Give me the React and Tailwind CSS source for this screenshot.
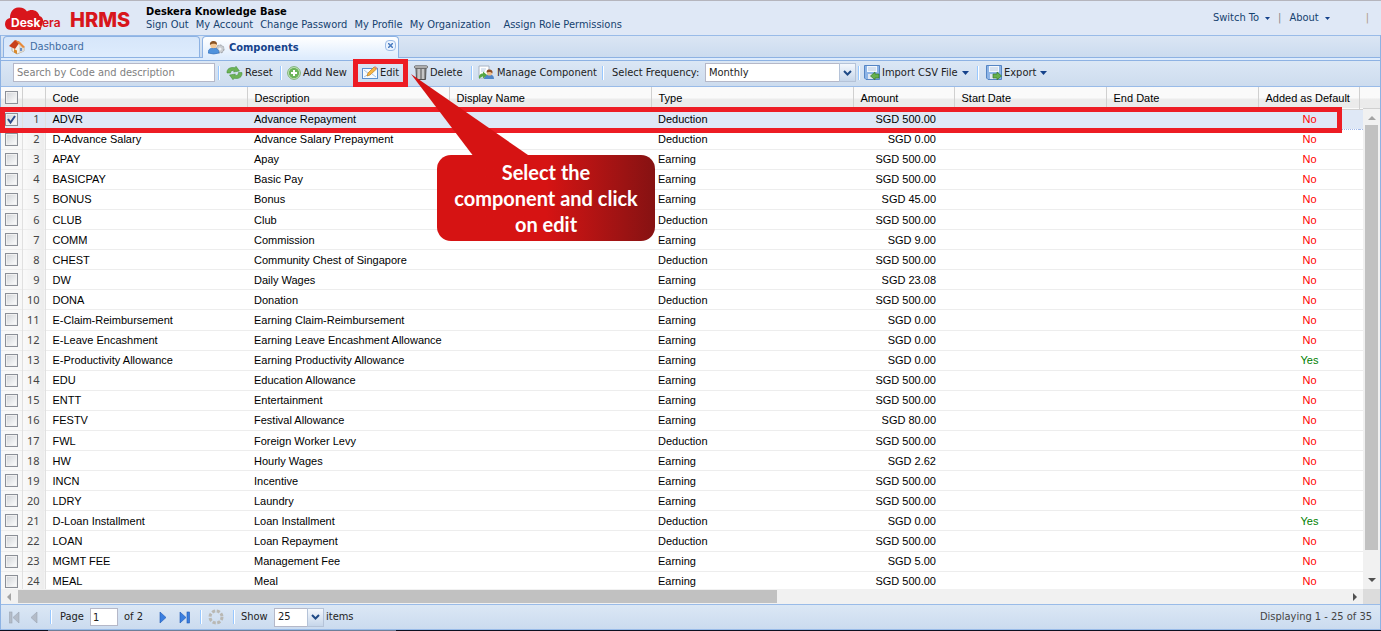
import React from "react";
import clsx from "clsx";

const links = [
  "Sign Out",
  "My Account",
  "Change Password",
  "My Profile",
  "My Organization",
];

const rows = [
  ["ADVR", "Advance Repayment", "Deduction", "500.00"],
  ["D-Advance Salary", "Advance Salary Prepayment", "Deduction", "0.00"],
  ["APAY", "Apay", "Earning", "500.00"],
  ["BASICPAY", "Basic Pay", "Earning", "500.00"],
  ["BONUS", "Bonus", "Earning", "45.00"],
  ["CLUB", "Club", "Deduction", "500.00"],
  ["COMM", "Commission", "Earning", "9.00"],
  ["CHEST", "Community Chest of Singapore", "Deduction", "500.00"],
  ["DW", "Daily Wages", "Earning", "23.08"],
  ["DONA", "Donation", "Deduction", "500.00"],
  ["E-Claim-Reimbursement", "Earning Claim-Reimbursement", "Earning", "0.00"],
  ["E-Leave Encashment", "Earning Leave Encashment Allowance", "Earning", "0.00"],
  ["E-Productivity Allowance", "Earning Productivity Allowance", "Earning", "0.00", true],
  ["EDU", "Education Allowance", "Earning", "500.00"],
  ["ENTT", "Entertainment", "Earning", "500.00"],
  ["FESTV", "Festival Allowance", "Earning", "80.00"],
  ["FWL", "Foreign Worker Levy", "Deduction", "500.00"],
  ["HW", "Hourly Wages", "Earning", "2.62"],
  ["INCN", "Incentive", "Earning", "500.00"],
  ["LDRY", "Laundry", "Earning", "500.00"],
  ["D-Loan Installment", "Loan Installment", "Deduction", "0.00", true],
  ["LOAN", "Loan Repayment", "Deduction", "500.00"],
  ["MGMT FEE", "Management Fee", "Earning", "5.00"],
  ["MEAL", "Meal", "Earning", "500.00"],
];

const columns = [
  "Code",
  "Description",
  "Display Name",
  "Type",
  "Amount",
  "Start Date",
  "End Date",
  "Added as Default",
];

/* ---------- icons ---------- */

const Logo = () => (
  <svg width="126" height="28" viewBox="0 0 126 28" aria-label="Deskera HRMS">
    <path
      d="M6 25C2 25 0 22 0 19C0 16 2 13.500 5 13C5 7 8 3 13 2.500C17 2 20 3.500 22 6.500C26 3.500 33 5 34.500 11C37.500 12 39 15 37.500 18.500L35.500 25Z"
      fill="#d8161c"
    />
    <text x="6" y="22" fontSize="12" fontWeight="700" fill="#fff" className="font-['Inter']">
      Desk
    </text>
    <text x="37" y="22" fontSize="12" fontWeight="600" fill="#d8161c" className="font-['Inter']">
      era
    </text>
    <text x="65" y="22" fontSize="20" fontWeight="800" fill="#d8161c" className="font-['Inter']">
      HRMS
    </text>
  </svg>
);

const HomeIcon = () => (
  <svg width="17" height="16" viewBox="0 0 17 16">
    <path d="M3 7L9 4L15 8V12L8 15L3 12Z" fill="#f3f0ea" stroke="#b9a88d" strokeWidth="0.800" />
    <path d="M9 4L15 8V12L10 14V8Z" fill="#dcd9d2" />
    <path d="M0 7L6 1L11 3L6 10Z" fill="#c8401c" />
    <path d="M6 1L11 3L16 8L14 9L10 5Z" fill="#e88a3a" />
    <path d="M5 10L8 11.500V15L5 13.500Z" fill="#d98a2b" />
    <rect x="11" y="9" width="2" height="3" fill="#6a8fc4" />
  </svg>
);

const UserGearIcon = () => (
  <svg width="17" height="16" viewBox="0 0 17 16">
    <circle cx="12" cy="9" r="4" fill="#c9ccd0" stroke="#9a9ea5" strokeDasharray="2 1" />
    <circle cx="12" cy="9" r="1.500" fill="#eef1f5" />
    <path d="M0 13C0 9 3 8 5.500 8C8 8 11 9 11 13Q6 15 0 13Z" fill="#4f92dc" stroke="#2f6ab5" strokeWidth="0.600" />
    <circle cx="5.500" cy="5" r="3.200" fill="#f3c795" />
    <path d="M2 5C1.500 2 3.500 1 5.500 1C8 1 9.500 2.500 8.800 5C8 3.500 4 3 2 5Z" fill="#8a5424" />
  </svg>
);

const RefreshIcon = () => (
  <svg width="17" height="14" viewBox="0 0 17 14">
    <g fill="#6db356" stroke="#3f8a35" strokeWidth="0.500">
      <path d="M1 7C.5 3 4 .6 9 1.800L10 .3L13.500 5L7.500 6L8.500 4.600C6.500 4 4.500 4.800 4.500 7Z" />
      <path d="M16 6.500C16.500 11 13 13.400 8 12.200L7 13.700L3.500 9L9.500 8L8.500 9.400C10.500 10 12.500 9.200 12.500 6.500Z" />
    </g>
  </svg>
);

const AddIcon = () => (
  <svg width="14" height="14" viewBox="0 0 14 14">
    <circle cx="7" cy="7" r="6.300" fill="#e6f4df" stroke="#6dab60" />
    <circle cx="7" cy="7" r="5.200" fill="#6cb45a" />
    <path d="M7 4V10M4 7H10" stroke="#fff" strokeWidth="2" />
  </svg>
);

const EditIcon = () => (
  <svg width="16" height="14" viewBox="0 0 16 14">
    <rect x=".5" y="2.500" width="15" height="10" fill="#f7fbff" stroke="#5b8fd0" />
    <path d="M2 4L7 8L2 11M14 11L10 8" fill="none" stroke="#a9c6ea" />
    <path d="M5 10L6 7L12 1L14.500 3L8 9Z" fill="#f6b545" stroke="#c07c1c" strokeWidth="0.700" />
    <path d="M12 1L13 0L15.500 2L14.500 3Z" fill="#e58b74" />
  </svg>
);

const TrashIcon = () => (
  <svg width="14" height="15" viewBox="0 0 14 15">
    <path d="M2 3H12L11.500 14.500H2.500Z" fill="#a5a5a5" stroke="#4e4e4e" />
    <path d="M5 4V14M9 4V14" stroke="#e6e6e6" />
    <path d="M7 4V14M11 4V14" stroke="#666" strokeWidth="0.800" />
    <rect x=".5" y=".8" width="13" height="2.400" rx="1" fill="#c9c9c9" stroke="#555" strokeWidth="0.800" />
  </svg>
);

const ManageIcon = () => (
  <svg width="17" height="15" viewBox="0 0 17 15">
    <path d="M1 1H11V13H1Z" fill="#fff" stroke="#a8b4c4" />
    <path d="M3 4H8M3 6H7" stroke="#b8cbe2" />
    <path d="M6 14C6 10 9 9.500 11 9.500C13 9.500 16 10 16 14Z" fill="#4f86c9" />
    <circle cx="11.500" cy="8" r="2.600" fill="#f0bd8b" />
    <path d="M8.500 7.500C8.500 5 10 4.500 11.500 4.500C13.500 4.500 15 5.500 14.500 8.500C13.500 6.800 11 6.500 8.500 7.500Z" fill="#8d4c22" />
    <path d="M1 11C2 9 3.500 8.500 5 8.500V6.500L9 10L5 13.500V11.500C3.500 11.500 2.500 12.500 1 14Z" fill="#57a643" />
  </svg>
);

const DiskIcon = ({ out }) => (
  <svg width="16" height="15" viewBox="0 0 16 15">
    <path d="M.5 .5H15.500V14.500H2L.5 13Z" fill="#8db4e6" stroke="#5585c4" />
    <rect x="3" y="1" width="10" height="6" fill="#f2f7fd" />
    <path d="M4 3H12M4 5H12" stroke="#b9cbe2" />
    <rect x="4" y="9" width="7" height="5" fill="#dfe7f1" />
    <path
      d={out ? "M7 9H11V7L15.500 11L11 14.800V13H7Z" : "M15 9H11V7L6.500 11L11 14.800V13H15Z"}
      fill="#66b04c"
      stroke="#357a2a"
      strokeWidth="0.700"
    />
  </svg>
);

const Caret = () => (
  <svg width="7" height="4" viewBox="0 0 7 4">
    <path d="M0 0H7L3.500 4Z" fill="#15428b" />
  </svg>
);

const SmallCaret = () => (
  <svg width="5" height="3" viewBox="0 0 5 3">
    <path d="M0 0H5L2.500 3Z" fill="#15428b" />
  </svg>
);

const PageArrow = ({ back, bar, muted }) => (
  <svg
    width="12"
    height="13"
    viewBox="0 0 12 13"
    className={clsx(back && "-scale-x-100")}
    fill={muted ? "#b4bcc8" : "#3b7fe0"}
    stroke={muted ? "#9ba5b3" : "#1f57b4"}
    strokeWidth="0.600"
  >
    <path d={bar ? "M1 1L7 6.500L1 12Z" : "M3 1L9 6.500L3 12Z"} />
    {bar && <rect x="8" y="1" width="2.500" height="11" />}
  </svg>
);

const Loader = () => (
  <svg width="16" height="16" viewBox="0 0 16 16">
    <circle cx="8" cy="8" r="6" fill="none" stroke="#b9b8b3" strokeWidth="3" strokeDasharray="3.200 1.512" />
  </svg>
);

/* ---------- small parts ---------- */

const Separator = ({ className }) => (
  <span className={clsx("h-[14px] w-[2px] shrink-0 border-r border-white bg-[#98c8ff]", className)} />
);

const ToolButton = ({ icon, label, menu, className }) => (
  <button type="button" className={clsx("flex h-5 shrink-0 items-center gap-[2px] whitespace-nowrap", className)}>
    {icon}
    <span>{label}</span>
    {menu && (
      <span className="ml-[2px]">
        <Caret />
      </span>
    )}
  </button>
);

const Combo = ({ id, label, value, className }) => (
  <div className={clsx("relative h-[19px] shrink-0", className)}>
    <select
      id={id}
      aria-label={label}
      defaultValue={value}
      className="h-full w-full appearance-none border border-[#b5b8c8] bg-white pl-[3px]"
    >
      <option>{value}</option>
    </select>
    <span className="pointer-events-none absolute inset-y-0 right-0 flex w-[17px] items-center justify-center border border-[#b5c3d8] bg-gradient-to-b from-[#f4f8fd] to-[#c6d6ea]">
      <svg width="9" height="6" viewBox="0 0 9 6">
        <path d="M1 1L4.500 4.500L8 1" fill="none" stroke="#1f4a86" strokeWidth="2" />
      </svg>
    </span>
  </div>
);

const Checkbox = ({ label, checked }) => (
  <span className="ml-1 grid h-[13px] w-[13px]">
    <input
      type="checkbox"
      aria-label={label}
      defaultChecked={checked}
      className="peer col-start-1 row-start-1 h-[13px] w-[13px] appearance-none border border-[#8b8f97] bg-gradient-to-br from-[#cfd2d6] to-white shadow-[inset_0_0_0_1px_#f0f0f0]"
    />
    <svg viewBox="0 0 13 13" className="pointer-events-none invisible col-start-1 row-start-1 peer-checked:visible">
      <path d="M3 6L5.500 9.500L10 3" fill="none" stroke="#2c4a8c" strokeWidth="2" />
    </svg>
  </span>
);

/* ---------- sections ---------- */

const Header = () => (
  <header className="flex h-[35px] items-start border-t border-[#b5b5bd] bg-[#dfe8f6] pl-[5px] text-[#15426f]">
    <div className="mt-1 w-[141px] shrink-0">
      <Logo />
    </div>
    <div className="mt-1 grow">
      <h1 className="text-[11px] leading-[13px] font-bold text-black">Deskera Knowledge Base</h1>
      <nav className="flex gap-[7px] leading-[13px] whitespace-nowrap">
        {links.map((link) => (
          <a key={link} href="#">
            {link}
          </a>
        ))}
        <a href="#" className="ml-[6px]">
          Assign Role Permissions
        </a>
      </nav>
    </div>
    <div className="mt-[10px] flex shrink-0 items-center pr-3">
      <button type="button" className="flex items-center gap-[6px]">
        Switch To
        <SmallCaret />
      </button>
      <span className="mx-2 text-[#888]">|</span>
      <button type="button" className="flex items-center gap-[6px]">
        About
        <SmallCaret />
      </button>
      <span className="ml-9 text-[#b09a86]">|</span>
    </div>
  </header>
);

const Tabs = () => (
  <div className="border-t border-[#99bbe8]">
    <div className="flex h-[22px] items-end gap-[2px] border-b border-[#8db2e3] bg-gradient-to-b from-[#dbe6f4] to-[#cbdbef] pl-[2px]">
      <button
        type="button"
        className="flex h-[21px] w-[197px] items-center gap-1 rounded-t border border-b-0 border-[#8db2e3] bg-gradient-to-b from-[#d6e6fa] to-[#deecfd] pl-[5px] text-[#416da3]"
      >
        <HomeIcon />
        Dashboard
      </button>
      <div className="-mb-px flex h-[22px] w-[197px] items-center rounded-t border border-b-0 border-[#8db2e3] bg-gradient-to-b from-white to-[#deecfd] pl-[5px]">
        <button type="button" className="flex grow items-center gap-1 font-bold text-[#15428b]">
          <UserGearIcon />
          Components
        </button>
        <button
          type="button"
          aria-label="Close tab"
          className="mr-[2px] mb-1 flex h-[11px] w-[11px] items-center justify-center rounded-sm border border-[#9cbbe6] bg-[#eaf3fe]"
        >
          <svg width="5" height="5" viewBox="0 0 5 5">
            <path d="M0 0L5 5M5 0L0 5" stroke="#4b7cc0" strokeWidth="1.500" />
          </svg>
        </button>
      </div>
    </div>
    <div className="h-[3px] border-b border-[#8db2e3] bg-[#deecfd]" />
  </div>
);

const Toolbar = () => (
  <div className="flex h-[26px] items-center border-b border-[#99bbe8] bg-gradient-to-b from-[#dbe7f5] to-[#cddcee] pb-[2px] pl-3 text-[#222]">
    <input
      type="text"
      aria-label="Search"
      placeholder="Search by Code and description"
      className="h-[19px] w-[202px] shrink-0 border border-[#b5b8c8] bg-white px-[3px] placeholder:text-[#808080]"
    />
    <Separator className="ml-[3px]" />
    <ToolButton icon={<RefreshIcon />} label="Reset" className="ml-[6px] w-[54px]" />
    <Separator />
    <ToolButton icon={<AddIcon />} label="Add New" className="ml-[5px] w-[66px]" />
    <div className="z-10 -my-1 flex h-7 w-[55px] shrink-0 items-center border-[5px] border-[#ed1c24] pl-1">
      <ToolButton icon={<EditIcon />} label="Edit" />
    </div>
    <ToolButton icon={<TrashIcon />} label="Delete" className="ml-[6px] w-[57px]" />
    <Separator />
    <ToolButton icon={<ManageIcon />} label="Manage Component" className="ml-[5px] w-[124px]" />
    <Separator />
    <label htmlFor="frequency" className="ml-2 w-[93px] shrink-0 whitespace-nowrap">
      Select Frequency:
    </label>
    <Combo id="frequency" value="Monthly" className="w-[151px]" />
    <Separator className="ml-[2px]" />
    <ToolButton icon={<DiskIcon />} label="Import CSV File" menu className="ml-1 w-[113px]" />
    <Separator />
    <ToolButton icon={<DiskIcon out />} label="Export" menu className="ml-[7px]" />
  </div>
);

const Grid = () => (
  <div className="relative">
    <div className="flex h-[502px] overflow-hidden bg-white font-['Liberation_Sans',Arial,sans-serif]">
      <div className="min-w-0 grow">
        <table className="h-[505px] w-full table-fixed border-collapse whitespace-nowrap text-black">
          <colgroup>
            <col className="w-[21px]" />
            <col className="w-[23px]" />
            <col className="w-[202px]" />
            <col className="w-[202px]" />
            <col className="w-[202px]" />
            <col className="w-[202px]" />
            <col className="w-[101px]" />
            <col className="w-[152px]" />
            <col className="w-[152px]" />
            <col className="w-[101px]" />
            <col />
          </colgroup>
          <thead>
            <tr className="h-[22px] border-b border-[#d0d0d0] bg-gradient-to-b from-[#fafafa] from-50% to-[#ebebeb] to-60% text-left">
              <th className="border-r border-[#d0d0d0] p-0">
                <Checkbox label="Select all" />
              </th>
              <th className="border-r border-[#d0d0d0] p-0" />
              {columns.map((name) => (
                <th key={name} className="border-r border-[#d0d0d0] p-0 pl-[7px] font-normal">
                  {name}
                </th>
              ))}
              <th className="p-0" />
            </tr>
          </thead>
          <tbody>
            {rows.map(([code, description, type, amount, isDefault], i) => (
              <tr
                key={code}
                className={clsx(
                  "h-5 border-b",
                  i === 0 ? "border-dotted border-[#a3bae9] bg-[#dfe8f6]" : "border-[#ededed]"
                )}
              >
                <td className={clsx("border-r border-[#e0e0e0] p-0", i > 0 && "bg-[#f8f8f8]")}>
                  <Checkbox label={`Select ${code}`} checked={i === 0} />
                </td>
                <td
                  className={clsx(
                    "border-r border-[#e0e0e0] p-0 pr-[5px] text-right font-['Noto_Sans',sans-serif] text-[#444]",
                    i > 0 && "bg-gradient-to-r from-[#fafafa] to-[#ececec]"
                  )}
                >
                  {i + 1}
                </td>
                <td className="p-0 pl-[7px]">{code}</td>
                <td className="p-0 pl-[7px]">{description}</td>
                <td />
                <td className="p-0 pl-[7px]">{type}</td>
                <td className="p-0 pr-[18px] text-right">SGD {amount}</td>
                <td />
                <td />
                <td className={clsx("p-0 pl-[2px] text-center", isDefault ? "text-[#008000]" : "text-[#f00]")}>
                  {isDefault ? "Yes" : "No"}
                </td>
                <td />
              </tr>
            ))}
          </tbody>
        </table>
      </div>
      {/* vertical scrollbar */}
      <div className="flex w-[17px] shrink-0 flex-col">
        <div className="h-[22px] border-b border-[#d0d0d0] bg-gradient-to-b from-[#fafafa] from-50% to-[#ebebeb] to-60%" />
        <div className="flex grow flex-col items-center bg-[#f1f1f1]">
          <svg width="8" height="16" viewBox="0 0 8 16" className="shrink-0">
            <path d="M0 11H8L4 7Z" fill="#a3a3a3" />
          </svg>
          <div className="flex w-full grow justify-center">
            <div className="h-[95%] w-[13px] bg-[#c1c1c1]" />
          </div>
          <svg width="8" height="17" viewBox="0 0 8 17" className="shrink-0">
            <path d="M0 6H8L4 10Z" fill="#505050" />
          </svg>
        </div>
      </div>
    </div>
    {/* horizontal scrollbar */}
    <div className="flex h-[15px] items-center bg-[#f1f1f1]">
      <svg width="17" height="8" viewBox="0 0 17 8" className="shrink-0">
        <path d="M10 0V8L6 4Z" fill="#a3a3a3" />
      </svg>
      <div className="grow">
        <div className="h-[13px] w-4/7 bg-[#c1c1c1]" />
      </div>
      <svg width="16" height="8" viewBox="0 0 16 8" className="shrink-0">
        <path d="M6 0V8L10 4Z" fill="#505050" />
      </svg>
      <div className="h-full w-[17px] shrink-0 bg-[#dcdcdc]" />
    </div>
    {/* highlight round the selected row */}
    <div className="pointer-events-none absolute top-5 right-[38px] -left-px h-[26px] border-[5px] border-[#ed1c24]" />
  </div>
);

const Pager = () => (
  <footer className="flex h-[26px] items-center border-t border-b border-[#99bbe8] bg-gradient-to-b from-[#dbe7f5] to-[#cbdbef] pr-2 pl-[7px] text-[#222]">
    <button type="button" aria-label="First page" className="w-5">
      <PageArrow back bar muted />
    </button>
    <button type="button" aria-label="Previous page" className="w-[22px]">
      <PageArrow back muted />
    </button>
    <Separator />
    <label htmlFor="page" className="ml-2 w-[30px]">
      Page
    </label>
    <input id="page" type="text" defaultValue="1" className="h-[18px] w-7 border border-[#b5b8c8] bg-white px-[2px]" />
    <span className="ml-[6px] w-[25px] whitespace-nowrap">of 2</span>
    <button type="button" aria-label="Next page" className="ml-2 w-[22px]">
      <PageArrow />
    </button>
    <button type="button" aria-label="Last page" className="w-[21px]">
      <PageArrow bar />
    </button>
    <Separator />
    <button type="button" aria-label="Refresh" className="ml-[6px] w-[25px]">
      <Loader />
    </button>
    <Separator />
    <label htmlFor="size" className="ml-[6px] w-[33px]">
      Show
    </label>
    <Combo id="size" value="25" className="w-[50px]" />
    <span className="ml-[2px]">items</span>
    <span className="ml-auto text-[#444]">Displaying 1 - 25 of 35</span>
  </footer>
);

const Callout = () => (
  <div className="absolute top-[155px] left-[437px] z-20 w-[218px]">
    <svg width="120" height="84" viewBox="0 0 120 84" className="absolute -top-[81px] -left-[27px]">
      <path d="M1 0L64 83H120L118 81Z" fill="#d61313" />
    </svg>
    <p className="relative rounded-[14px] bg-gradient-to-r from-[#d61313] from-50% to-[#861212] py-1 text-center font-['Lato',sans-serif] text-[20px] leading-[26px] font-bold text-white">
      Select the
      <br />
      component and click
      <br />
      on edit
    </p>
  </div>
);

export default function App() {
  return (
    <div className="relative flex min-h-screen flex-col overflow-hidden bg-[#dfe8f6] font-['DejaVu_Sans_Condensed','Noto_Sans',sans-serif] text-[11px] leading-[14px]">
      <Header />
      <main className="flex grow flex-col border-x border-[#8db2e3]">
        <Tabs />
        <Toolbar />
        <Grid />
        <Pager />
      </main>
      <div className="flex h-px bg-[#0c1020]">
        <span className="ml-12 w-[348px] bg-[#6f7f99]" />
      </div>
      <Callout />
    </div>
  );
}
